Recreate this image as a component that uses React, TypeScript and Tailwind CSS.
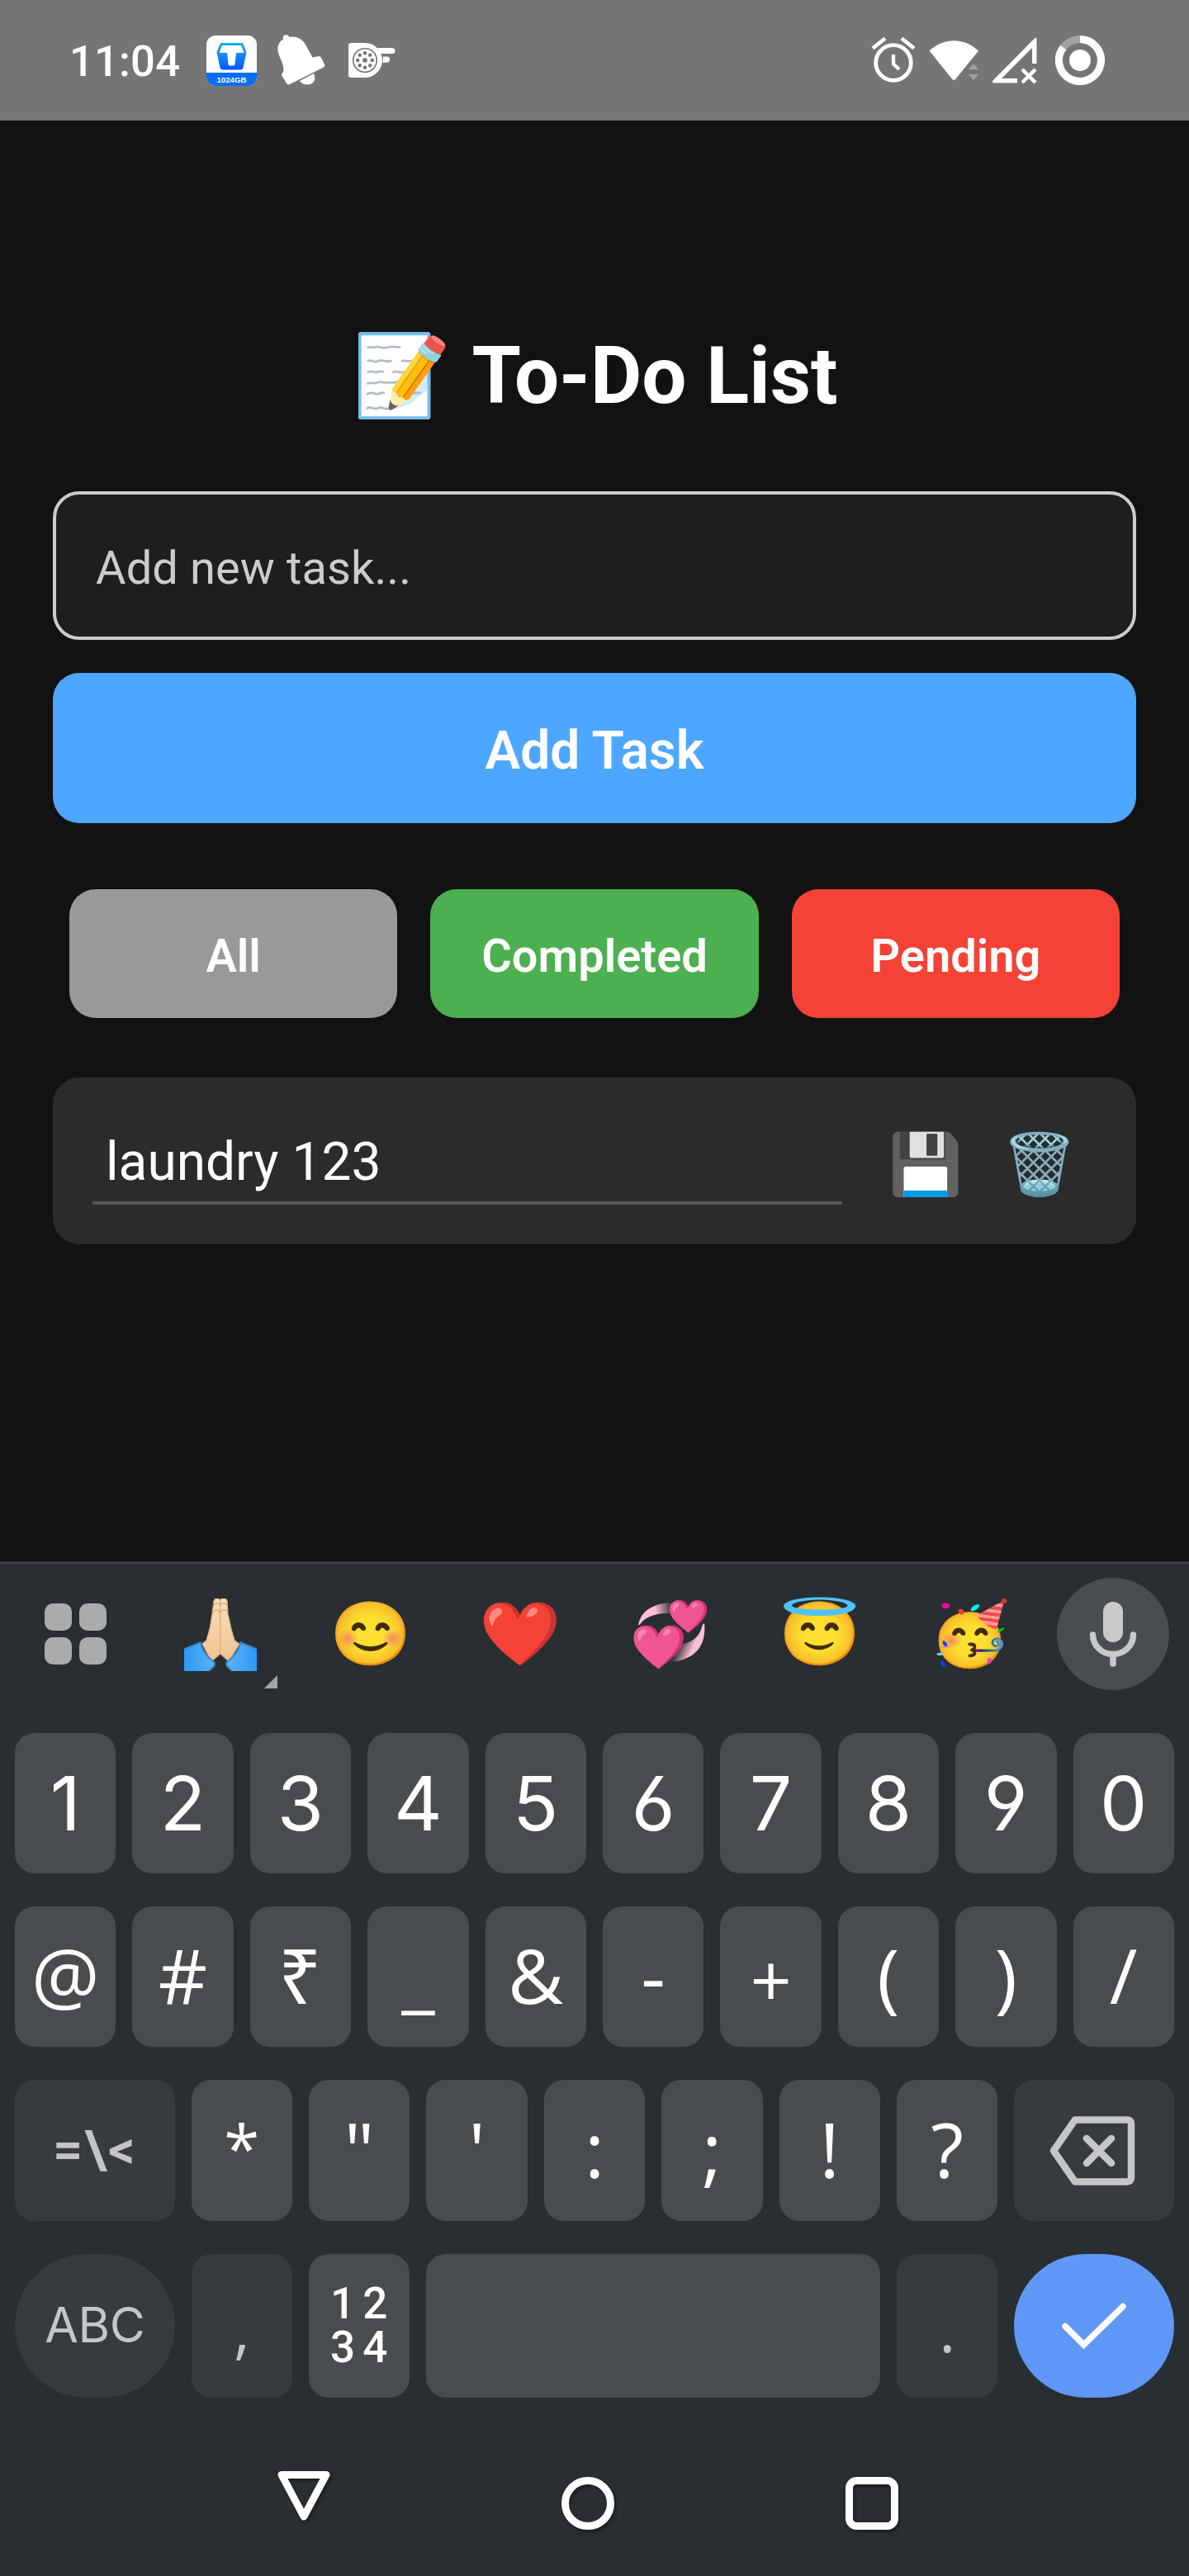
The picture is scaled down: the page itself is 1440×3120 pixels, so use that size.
import React from "react";

const EMOJI = "inline-flex items-center justify-center leading-none font-['Noto_Color_Emoji',sans-serif]";

function StatusBar() {
  return (
    <header className="flex h-[146px] shrink-0 items-center justify-between bg-[#757575] pl-[84px] pr-[102px]">
      <div className="flex items-center">
        <span className="w-[166px] pt-[2px] text-[52.5px] font-medium leading-[52px] tracking-[0.2px]">11:04</span>
        <svg className="h-[61px] w-[61px]" viewBox="0 0 61 61">
          <defs>
            <linearGradient id="tb" x1="0" y1="0" x2="0" y2="1">
              <stop offset="0" stopColor="#19b0f0" />
              <stop offset="1" stopColor="#0a55f5" />
            </linearGradient>
            <clipPath id="tbClip">
              <rect width="61" height="61" rx="11" />
            </clipPath>
          </defs>
          <g clipPath="url(#tbClip)">
            <rect width="61" height="61" fill="#fff" />
            <rect y="45" width="61" height="16" fill="#0a6df2" />
          </g>
          <path d="M17 9h27l4.500 11-4 19q-.8 2.500-3.500 2.500H20q-2.700 0-3.500-2.500l-4-19z" fill="url(#tb)" />
          <path d="M19 12h23l3.500 9H36l-1.500 14q-.2 1.500-2 1.500h-4q-1.800 0-2-1.500L25 21h-9.500z" fill="#fff" />
          <text x="30.500" y="57" textAnchor="middle" fontSize="9.500" fontWeight="700" fill="#fff" fontFamily="Liberation Sans, sans-serif" textLength="36" lengthAdjust="spacingAndGlyphs">1024GB</text>
        </svg>
        <svg className="ml-[25px] h-[62px] w-[58px]" viewBox="0 0 58 62">
          <g fill="#fff">
            <circle cx="10.500" cy="4" r="3.800" />
            <path d="M8 5C18 0 29 3 34 12l8.500 15.500L50 26q2 0 3 2l4 8q1 2-1 3.500L15 60q-2.500 1.200-4-1L5.500 50q-1-2 .5-3.500l1.500-2.500C8 36 3 29 1 22-1 14 2 8 8 5z" />
            <path d="M27 56l17-9c3 6 .5 11-3 12.500-5 2.200-11 1-14-3.500z" />
          </g>
        </svg>
        <svg className="ml-[27px] h-[44px] w-[58px]" viewBox="0 0 58 44">
          <path d="M4 1h17a20.800 20.800 0 0 1 0 42H4q-3 0-3-3V4q0-3 3-3z" fill="#fff" />
          <path d="M36 7h18a3.500 3.500 0 0 1 0 7H40zM43 17.500h4.500a3.500 3.500 0 0 1 0 7.200H42.500z" fill="#fff" />
          <circle cx="21" cy="22" r="14.300" fill="none" stroke="#757575" strokeWidth="1.600" />
          <g fill="#757575">
            <circle cx="21" cy="22" r="2.800" />
            <circle cx="21" cy="13.200" r="2.200" />
            <circle cx="21" cy="30.800" r="2.200" />
            <circle cx="12.200" cy="22" r="2.200" />
            <circle cx="29.800" cy="22" r="2.200" />
            <circle cx="14.800" cy="15.800" r="2.200" />
            <circle cx="27.200" cy="15.800" r="2.200" />
            <circle cx="14.800" cy="28.200" r="2.200" />
            <circle cx="27.200" cy="28.200" r="2.200" />
          </g>
        </svg>
      </div>
      <div className="flex items-center">
        <svg className="h-[62px] w-[54px]" viewBox="0 0 54 62">
          <g fill="none" stroke="#fff" strokeWidth="4.800">
            <circle cx="27" cy="34" r="21.300" />
            <path d="M2 16.500L17 4.500M37 4.500L52 16.500" />
            <path d="M27 24v11.500l7 6.500" strokeWidth="4.300" />
          </g>
        </svg>
        <svg className="ml-[16px] h-[62px] w-[62px]" viewBox="0 0 62 62">
          <path d="M.5 19.500C18 3 43 3 60 19.500L33 53q-2.700 4-5.500 0z" fill="#fff" />
          <path d="M54 35l6.300 7.300H47.700zM47.700 48h12.600L54 55.200z" fill="#a2a2a2" />
        </svg>
        <svg className="ml-[14px] h-[62px] w-[58px]" viewBox="0 0 58 62">
          <path d="M54.500 35V6q0-4-2.500-1.500L1.500 55.500Q0 58.500 3 58.500H31v-5.500H12L49 16v19z" fill="#fff" />
          <path d="M37 42L53 58M53 42L37 58" stroke="#fff" strokeWidth="4.500" />
        </svg>
        <svg className="ml-[19px] h-[60px] w-[60px]" viewBox="0 0 60 60">
          <circle cx="30" cy="30" r="25.500" fill="none" stroke="#a2a2a2" strokeWidth="9" />
          <path d="M30 4.500A25.500 25.500 0 1 1 9.700 14.500" fill="none" stroke="#fff" strokeWidth="9" />
          <circle cx="30" cy="30" r="13" fill="#fff" />
        </svg>
      </div>
    </header>
  );
}

function TodoScreen() {
  return (
    <main className="flex h-[1745px] shrink-0 flex-col bg-[#121212] px-16">
      <h1 className="mt-[245px] flex h-[128px] items-center justify-center pl-[2px] text-[96px] font-bold leading-[128px]">
        <span className={`w-[120px] text-[96px] font-normal ${EMOJI}`}>📝</span>
        <span className="ml-6">To-Do List</span>
      </h1>
      <div className="mt-[76px] flex h-[180px] items-center rounded-[32px] border-4 border-[#cccccc] bg-[#1e1e1e] pl-[48px] pt-[6px] text-[56px] leading-[64px] tracking-[0.1px] text-[#cccccc]">
        Add new task...
      </div>
      <button className="mt-10 h-[182px] rounded-[32px] bg-[#4da6ff] pt-[7px] text-[64px] font-semibold leading-[72px]">Add Task</button>
      <div className="mt-20 flex gap-10 px-5">
        <button className="h-[156px] flex-1 rounded-[32px] bg-[#999999] pt-[6px] text-[56px] font-semibold leading-[64px]">All</button>
        <button className="h-[156px] flex-1 rounded-[32px] bg-[#4caf50] pt-[6px] text-[56px] font-semibold leading-[64px]">Completed</button>
        <button className="h-[156px] flex-1 rounded-[32px] bg-[#f44336] pt-[6px] text-[56px] font-semibold leading-[64px]">Pending</button>
      </div>
      <div className="mt-[72px] flex h-[202px] items-center rounded-[32px] bg-[#2b2b2b] px-12">
        <div className="flex h-[106px] w-[908px] items-center border-b-4 border-[#555555] pl-4 pt-[8px] text-[64px] leading-[94px]">
          laundry 123
        </div>
        <button className={`ml-[56px] w-[90px] pt-[10px] text-[72px] ${EMOJI}`}>💾</button>
        <button className={`ml-[48px] w-[90px] pt-[10px] text-[72px] ${EMOJI}`}>🗑️</button>
      </div>
    </main>
  );
}

function PrayingHands() {
  return (
    <svg className="h-[88px] w-[88px]" viewBox="0 0 88 88">
      <defs>
        <linearGradient id="skin" x1="0" y1="0" x2="0" y2="1">
          <stop offset="0" stopColor="#fae0bc" />
          <stop offset="1" stopColor="#efc393" />
        </linearGradient>
        <linearGradient id="sleeveL" x1="0" x2="1">
          <stop offset="0" stopColor="#2a9af4" />
          <stop offset="1" stopColor="#5fb2f8" />
        </linearGradient>
        <linearGradient id="sleeveR" x1="1" x2="0">
          <stop offset="0" stopColor="#2a9af4" />
          <stop offset="1" stopColor="#5fb2f8" />
        </linearGradient>
      </defs>
      <path d="M36 3q2-4 5-3l2.500 2L46 0q4-1 6 3l1 16 4 18 4 14 6 4-13 21-10-9-11 9-11-21 5-4 4-14 3-18z" fill="url(#skin)" stroke="#dcb07a" strokeWidth="1.200" />
      <path d="M43.700 2v65M35 18q1-5 5-4 3 1 3.500 5 .5-4 4-5 4-1 5 4M36 9q1-4 4-3 3 0 3.500 3 .5-3 4-3 3-1 4.500 3" fill="none" stroke="#dfb17b" strokeWidth="1.500" />
      <path d="M0 61l19.500-8c2 9 8 17 17 24q1 3-1 5l-6 6H0z" fill="url(#sleeveL)" />
      <path d="M88 61l-19.500-8c-2 9-8 17-17 24q-1 3 1 5l6 6H88z" fill="url(#sleeveR)" />
      <path d="M0 61.500L19.500 53.500c2 9 8 17 17 24q1 3-1 5L30 88M88 61.500L68.500 53.500c-2 9-8 17-17 24q-1 3 1 5L58 88" fill="none" stroke="#3a88cc" strokeWidth="2" />
    </svg>
  );
}

const RECENT_EMOJI = ["😊", "❤️", "💞", "😇", "🥳"];

function SuggestionBar() {
  return (
    <div className="flex h-[168px] items-center pl-[54px] pr-[24px]">
      <div className="grid w-[75px] grid-cols-2 gap-x-[9px] gap-y-[8px]">
        <i className="h-[33px] rounded-[10px] bg-[#aaabac]" />
        <i className="h-[33px] rounded-[10px] bg-[#aaabac]" />
        <i className="h-[33px] rounded-[10px] bg-[#aaabac]" />
        <i className="h-[33px] rounded-[10px] bg-[#aaabac]" />
      </div>
      <div className="relative ml-[47px] flex h-full w-[182px] items-center justify-center pt-[2px]">
        <PrayingHands />
        <svg className="absolute bottom-[18px] right-[22px] h-4 w-4" viewBox="0 0 16 16">
          <path d="M16 0v16H0z" fill="#a3a5a6" />
        </svg>
      </div>
      {RECENT_EMOJI.map((e) => (
        <span key={e} className={`w-[181.400px] scale-x-105 text-[76px] ${EMOJI}`}>{e}</span>
      ))}
      <div className="ml-auto flex h-[136px] w-[136px] items-center justify-center rounded-full bg-[#494d4f]">
        <svg className="h-[80px] w-[60px]" viewBox="0 0 60 80">
          <rect x="18" y="1" width="24" height="49" rx="12" fill="#c7c9cb" />
          <path d="M5.500 41a24.500 23.500 0 0 0 49 0M30 65v11" fill="none" stroke="#c7c9cb" strokeWidth="7.500" strokeLinecap="round" />
        </svg>
      </div>
    </div>
  );
}

function DigitKey({ children }: { children: string }) {
  return (
    <button className="flex h-full w-[122.400px] items-center justify-center rounded-[24px] bg-[#494c4e] font-['Inter',sans-serif] text-[91px] leading-[110px] [font-feature-settings:'cv03','cv04']">
      {children}
    </button>
  );
}

function SymbolKey({ children, glyph = "pb-[4px] text-[92px]" }: { children: string; glyph?: string }) {
  return (
    <button className={`flex h-full w-[122.400px] items-center justify-center rounded-[24px] bg-[#494c4e] font-['Open_Sans',sans-serif] leading-[110px] ${glyph}`}>
      {children}
    </button>
  );
}

const GLYPH_TWEAKS: Record<string, string> = {
  "+": "pt-[5px] text-[88px]",
  "*": "pb-[8px] text-[78px] font-medium",
};

function Keyboard() {
  return (
    <section className="flex h-[1229px] shrink-0 flex-col border-t-4 border-[#363b3f] bg-[#292e32]">
      <SuggestionBar />
      <div className="mt-[36px] flex flex-col gap-10 px-[18px]">
        <div className="flex h-[170px] gap-5">
          {["1", "2", "3", "4", "5", "6", "7", "8", "9", "0"].map((k) => (
            <DigitKey key={k}>{k}</DigitKey>
          ))}
        </div>
        <div className="flex h-[170px] gap-5">
          {["@", "#", "₹", "_", "&", "-", "+", "(", ")", "/"].map((k) => (
            <SymbolKey key={k} glyph={GLYPH_TWEAKS[k]}>{k}</SymbolKey>
          ))}
        </div>
        <div className="flex h-[171px] gap-5">
          <button className="w-[193.600px] rounded-[24px] bg-[#373b3f] text-[64px] font-semibold leading-none tracking-[2px] text-[#c2c4c6]">{"=\\<"}</button>
          {["*", "\"", "'", ":", ";", "!", "?"].map((k) => (
            <SymbolKey key={k} glyph={GLYPH_TWEAKS[k]}>{k}</SymbolKey>
          ))}
          <button className="flex w-[193.600px] items-center justify-center rounded-[24px] bg-[#373b3f] pr-[5px]">
            <svg className="h-[84px] w-[104px]" viewBox="0 0 104 84" fill="none" stroke="#c4c6c8" strokeWidth="8.500" strokeLinejoin="round" strokeLinecap="round">
              <path d="M31 4.500h63q5 0 5 5v65q0 5-5 5H31L5 42z" />
              <path d="M45 27l30 30M75 27L45 57" />
            </svg>
          </button>
        </div>
        <div className="flex h-[174px] gap-5">
          <button className="w-[193.600px] rounded-[87px] bg-[#373b3f] pb-[3px] font-['Inter',sans-serif] text-[59px] leading-none tracking-[-0.5px] text-[#c4c6c8]">ABC</button>
          <button className="w-[122.400px] rounded-[24px] bg-[#373b3f] pt-[6px] font-['Open_Sans',sans-serif] text-[76px] leading-[100px] text-[#c4c6c8]">,</button>
          <button className="w-[122.400px] whitespace-pre-line rounded-[24px] bg-[#494c4e] pl-[8px] text-[53px] font-medium leading-[53px] tracking-[9px]">
            {"12\n34"}
          </button>
          <button className="w-[549.600px] rounded-[24px] bg-[#494c4e]" aria-label="space" />
          <button className="w-[122.400px] rounded-[24px] bg-[#373b3f] pt-[6px] font-['Open_Sans',sans-serif] text-[76px] leading-[100px] text-[#c4c6c8]">.</button>
          <button className="flex w-[193.600px] items-center justify-center rounded-[87px] bg-[#5f97f6]">
            <svg className="h-[56px] w-[80px]" viewBox="0 0 80 56" fill="none" stroke="#fff" strokeWidth="7.500" strokeLinecap="round">
              <path d="M5 28.500L27.500 51 75 4.500" />
            </svg>
          </button>
        </div>
      </div>
      <nav className="mt-[81px] flex items-start pl-[332px] [&>svg]:drop-shadow-[2px_3px_2px_rgba(0,0,0,0.35)]">
        <svg className="h-[70px] w-[72px]" viewBox="0 0 72 70">
          <path d="M9 12.500h54L36 63z" fill="none" stroke="#fff" strokeWidth="9" strokeLinejoin="round" />
        </svg>
        <svg className="ml-[272px] mt-[8px] h-[72px] w-[72px]" viewBox="0 0 72 72">
          <circle cx="36" cy="39" r="27.500" fill="none" stroke="#fff" strokeWidth="9" />
        </svg>
        <svg className="ml-[272px] mt-[8px] h-[72px] w-[72px]" viewBox="0 0 72 72">
          <rect x="8.500" y="11.500" width="55" height="55" rx="9" fill="none" stroke="#fff" strokeWidth="9" />
        </svg>
      </nav>
    </section>
  );
}

export default function App() {
  return (
    <div className="flex h-[3120px] w-[1440px] flex-col overflow-hidden bg-[#121212] font-['Roboto',sans-serif] text-white">
      <StatusBar />
      <TodoScreen />
      <Keyboard />
    </div>
  );
}
